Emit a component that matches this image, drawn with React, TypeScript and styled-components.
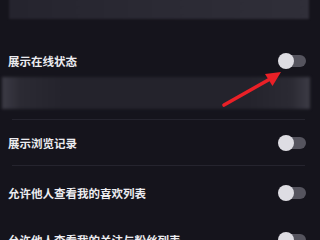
import React from "react";
import styled, { createGlobalStyle } from "styled-components";

const Global = createGlobalStyle`
  html, body { margin: 0; padding: 0; background: #15141c; }
  body { font-family: "Noto Sans CJK SC", "Noto Sans", sans-serif; }
`;

const Page = styled.div`
  position: relative;
  width: 320px;
  height: 240px;
  overflow: hidden;
  background: #15141c;
  display: flex;
  flex-direction: column;
`;

const TopBlur = styled.div`
  height: 19px;
  margin: -4px 11px 0 9px;
  padding-top: 4px;
  background: linear-gradient(90deg, #25242e 0%, #2b2a34 50%, #302f39 100%);
  filter: blur(1.2px);
  flex-shrink: 0;
`;

const Row = styled.div<{ $h: number; $mt?: number }>`
  height: ${(p) => p.$h}px;
  margin-top: ${(p) => p.$mt ?? 0}px;
  padding: 0 14px 0 8px;
  display: flex;
  align-items: center;
  justify-content: space-between;
  flex-shrink: 0;
`;

const Label = styled.span`
  color: #ececf0;
  font-size: 11.5px;
  font-weight: 600;
  letter-spacing: 0;
`;

const Track = styled.div`
  position: relative;
  width: 26px;
  height: 12px;
  border-radius: 6px;
  background: #55545e;
`;

const Knob = styled.div`
  position: absolute;
  left: -2px;
  top: -2px;
  width: 16px;
  height: 16px;
  border-radius: 50%;
  background: #dedde3;
`;

const BlurBand = styled.div`
  height: 32px;
  margin: 0 10px 0 2px;
  background: linear-gradient(
    90deg,
    #3c3b45 0%,
    #2b2a33 6%,
    #24232c 20%,
    #24232c 80%,
    #2b2a33 94%,
    #3c3b45 100%
  );
  filter: blur(1.5px);
  flex-shrink: 0;
`;

const Divider = styled.div<{ $mt?: number }>`
  height: 1px;
  margin: ${(p) => p.$mt ?? 0}px 15px 0 12px;
  background: #25242e;
  flex-shrink: 0;
`;

const Arrow = styled.svg`
  position: absolute;
  left: 0;
  top: 0;
  width: 320px;
  height: 240px;
  pointer-events: none;
`;

const Toggle = () => (
  <Track>
    <Knob />
  </Track>
);

export default function App() {
  return (
    <>
      <Global />
      <Page>
        <TopBlur />
        <Row $h={32} $mt={26}>
          <Label>展示在线状态</Label>
          <Toggle />
        </Row>
        <BlurBand />
        <Divider $mt={10} />
        <Row $h={45}>
          <Label>展示浏览记录</Label>
          <Toggle />
        </Row>
        <Divider />
        <Row $h={54}>
          <Label>允许他人查看我的喜欢列表</Label>
          <Toggle />
        </Row>
        <Row $h={40}>
          <Label>允许他人查看我的关注与粉丝列表</Label>
          <Toggle />
        </Row>
        <Arrow viewBox="0 0 320 240">
          <line x1="224" y1="105" x2="270" y2="79" stroke="#ea2027" strokeWidth="3.6" strokeLinecap="round" />
          <polygon points="281,72 272.5,86 265,74" fill="#ea2027" />
        </Arrow>
      </Page>
    </>
  );
}
